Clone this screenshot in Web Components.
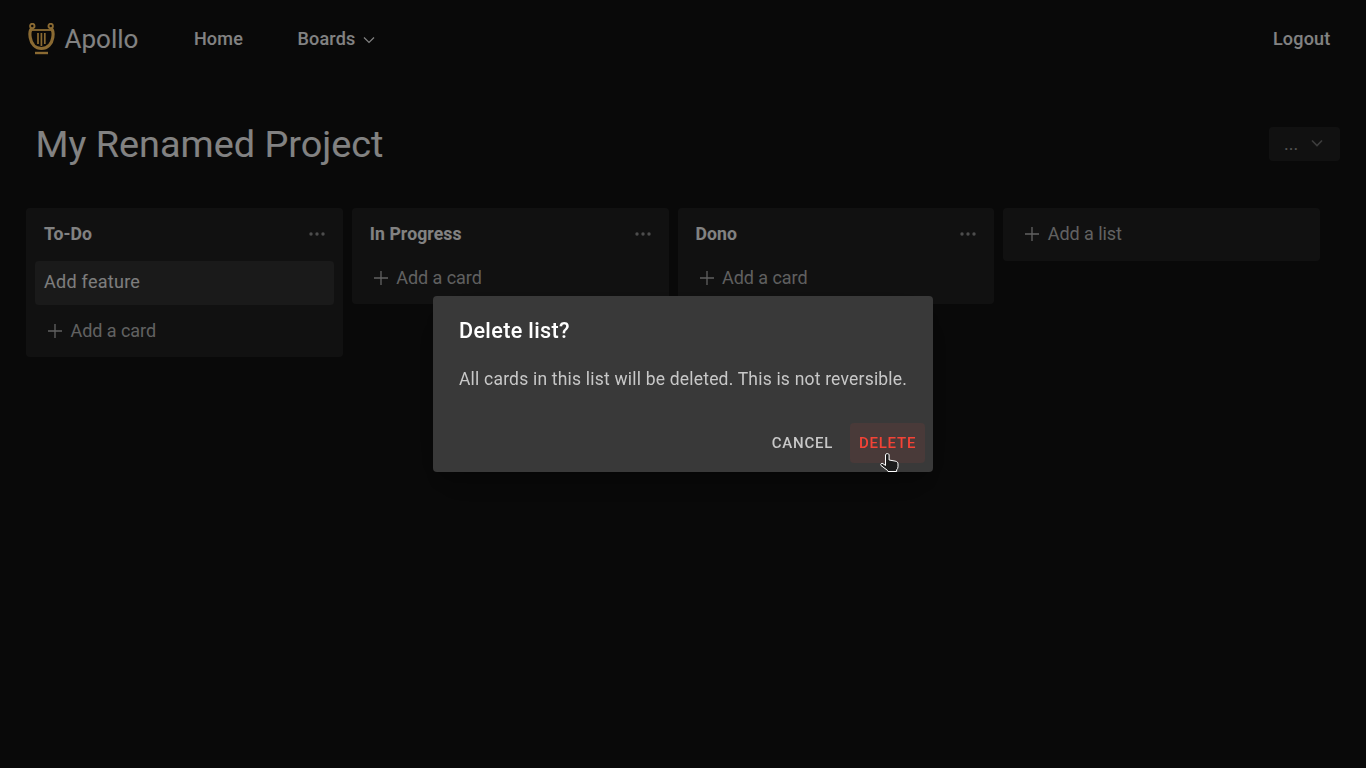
<!DOCTYPE html>
<html>
<head>
<meta charset="utf-8">
<title>Apollo</title>
<style>
    html, body { margin: 0; height: 100%; overflow: hidden; }
    body { background: #121212; font-family: Roboto, "Liberation Sans", sans-serif; color: #fff; }
</style>
</head>
<body>
<apollo-nav></apollo-nav>
<project-header>My Renamed Project</project-header>
<board-lists>
    <board-list name="To-Do"><list-card>Add feature</list-card></board-list>
    <board-list name="In Progress"></board-list>
    <board-list name="Dono"></board-list>
    <add-list></add-list>
</board-lists>
<dialog-overlay>
    <delete-dialog heading="Delete list?">All cards in this list will be deleted. This is not reversible.</delete-dialog>
</dialog-overlay>

<script>
class ApolloNav extends HTMLElement{
    constructor() {
        super();
        this.shadowDOM = this.attachShadow({mode:"open"});
        this.shadowDOM.innerHTML = `
        <style>
            :host { display: flex; align-items: center; height: 78px; padding: 0 35.500px 1px 26px; box-sizing: border-box; }
            svg.logo { width: 30px; height: 32px; margin: 1px 8.500px 0 0; }
            .brand { font-size: 26px; color: #f0f0f0; margin-right: 55.500px; }
            a { font-size: 18px; font-weight: 500; color: #f0f0f0; letter-spacing: .2px; }
            .boards { margin-left: 54.500px; display: flex; align-items: center; }
            .boards svg { width: 12px; height: 8px; margin-left: 7px; margin-top: 3px; }
            .logout { margin-left: auto; }
        </style>
        <svg class="logo" viewBox="0 0 30 32" fill="none" stroke="#ffc45d" stroke-width="3.200">
            <circle cx="6.300" cy="3" r="2.200" stroke-width="1.900"/>
            <circle cx="24.700" cy="3" r="2.200" stroke-width="1.900"/>
            <path d="M5.800 5.500C3.500 7.500 3.600 11 4.200 14.500 5.200 21 9.500 25.500 15.500 25.500S25.800 21 26.800 14.500C27.400 11 27.500 7.500 25.200 5.500"/>
            <path d="M5 7h21" stroke-width="1.800"/>
            <path d="M12 10v11M15.400 10v13M18.800 10v11" stroke-width="1.700"/>
            <path d="M9 30h13" stroke-width="2.400"/>
        </svg>
        <span class="brand">Apollo</span>
        <a>Home</a>
        <a class="boards">Boards
            <svg viewBox="0 0 12 8" fill="none" stroke="#f0f0f0" stroke-width="1.200"><path d="M1 1.500l5 5 5-5"/></svg>
        </a>
        <a class="logout">Logout</a>
        `;
    }
}
customElements.define("apollo-nav", ApolloNav);

class ProjectHeader extends HTMLElement{
    constructor() {
        super();
        this.shadowDOM = this.attachShadow({mode:"open"});
        this.shadowDOM.innerHTML = `
        <style>
            :host { display: flex; justify-content: space-between; align-items: center; height: 130px; padding: 0 26px 0 35.500px; }
            h1 { margin: 1px 0 0; font-size: 37.800px; font-weight: 400; color: #f0f0f0; }
            button { display: flex; align-items: center; justify-content: space-between; box-sizing: border-box; width: 71px; height: 34px; padding: 0 17px 0 15px; background: #212121; border: 0; border-radius: 4px; color: #9a9a9a; font: 18px Roboto, sans-serif; margin-top: 1px; }
            button svg { width: 12px; height: 8px; margin-top: -2px; }
        </style>
        <h1><slot></slot></h1>
        <button><span>...</span>
            <svg viewBox="0 0 12 8" fill="none" stroke="#707070" stroke-width="1.600"><path d="M1 1.500l5 5 5-5"/></svg>
        </button>
        `;
    }
}
customElements.define("project-header", ProjectHeader);

class BoardLists extends HTMLElement{
    constructor() {
        super();
        this.shadowDOM = this.attachShadow({mode:"open"});
        this.shadowDOM.innerHTML = `
        <style>
            :host { display: grid; grid-template-columns: repeat(4, 316.750px); column-gap: 9px; align-items: start; padding-left: 26px; }
        </style>
        <slot></slot>
        `;
    }
}
customElements.define("board-lists", BoardLists);

class BoardList extends HTMLElement{
    constructor() {
        super();
        this.shadowDOM = this.attachShadow({mode:"open"});
        this.shadowDOM.innerHTML = `
        <style>
            :host { display: block; background: #212121; border-radius: 4px; padding: 0 9px; }
            .head { display: flex; justify-content: space-between; align-items: center; height: 51px; padding: 0 9px 2px; }
            h3 { margin: 0; font-size: 17.600px; font-weight: 700; color: #f0f0f0; letter-spacing: .1px; }
            svg.dots { width: 16px; height: 4px; }
            .add { display: flex; align-items: center; box-sizing: border-box; height: 34px; padding: 0 0 1px 13px; font-size: 18px; color: #b4b4b4; }
            .add svg { width: 14px; height: 14px; margin-right: 9px; }
            .add span { position: relative; left: -.5px; letter-spacing: -.05px; }
            .foot { height: 9px; }
        </style>
        <div class="head">
            <h3></h3>
            <svg class="dots" viewBox="0 0 16 4" fill="#8e8e8e"><circle cx="2" cy="2" r="1.700"/><circle cx="8" cy="2" r="1.700"/><circle cx="14" cy="2" r="1.700"/></svg>
        </div>
        <slot></slot>
        <div class="add">
            <svg viewBox="0 0 14 14" fill="none" stroke="#b4b4b4" stroke-width="1.300"><path d="M7 0v14M0 7h14"/></svg>
            <span>Add a card</span>
        </div>
        <div class="foot"></div>
        `;
    }

    connectedCallback(){
        this.shadowDOM.querySelector("h3").textContent = this.getAttribute("name");
    }
}
customElements.define("board-list", BoardList);

class ListCard extends HTMLElement{
    constructor() {
        super();
        this.shadowDOM = this.attachShadow({mode:"open"});
        this.shadowDOM.innerHTML = `
        <style>
            :host { display: flex; align-items: center; box-sizing: border-box; height: 44px; padding: 0 9px 3px; margin-bottom: 9px; background: #303030; border-radius: 4px; font-size: 18px; letter-spacing: .27px; color: #e8e8e8; }
        </style>
        <slot></slot>
        `;
    }
}
customElements.define("list-card", ListCard);

class AddList extends HTMLElement{
    constructor() {
        super();
        this.shadowDOM = this.attachShadow({mode:"open"});
        this.shadowDOM.innerHTML = `
        <style>
            :host { display: flex; align-items: center; box-sizing: border-box; height: 53px; padding: 0 0 2px 22px; background: #212121; border-radius: 4px; font-size: 18px; color: #b4b4b4; }
            svg { width: 14px; height: 14px; margin-right: 9px; }
            span { position: relative; left: -.5px; letter-spacing: -.05px; }
        </style>
        <svg viewBox="0 0 14 14" fill="none" stroke="#b4b4b4" stroke-width="1.300"><path d="M7 0v14M0 7h14"/></svg>
        <span>Add a list</span>
        `;
    }
}
customElements.define("add-list", AddList);

class DialogOverlay extends HTMLElement{
    constructor() {
        super();
        this.shadowDOM = this.attachShadow({mode:"open"});
        this.shadowDOM.innerHTML = `
        <style>
            :host { position: fixed; inset: 0; display: flex; align-items: center; justify-content: center; background: rgba(0,0,0,.46); }
        </style>
        <slot></slot>
        `;
    }
}
customElements.define("dialog-overlay", DialogOverlay);

class DeleteDialog extends HTMLElement{
    constructor() {
        super();
        this.shadowDOM = this.attachShadow({mode:"open"});
        this.shadowDOM.innerHTML = `
        <style>
            :host { display: block; box-sizing: border-box; width: 500px; height: 176px; position: relative; background: #393939; border-radius: 4px; box-shadow: 0 11px 15px -7px rgba(0,0,0,.2), 0 24px 38px 3px rgba(0,0,0,.14), 0 9px 46px 8px rgba(0,0,0,.12); }
            h2 { margin: 0; padding: 22px 26px 0; font-size: 21.600px; line-height: 26px; font-weight: 500; color: #fff; letter-spacing: .35px; }
            p { margin: 0; padding: 23px 0 0 26px; font-size: 17.500px; line-height: 24px; color: #c8c8c8; letter-spacing: .2px; white-space: nowrap; }
            .actions { position: absolute; right: 8px; bottom: 9px; display: flex; align-items: center; gap: 0; }
            button { height: 40px; border: 0; border-radius: 4px; background: none; font: 500 15px Roboto, sans-serif; letter-spacing: .75px; text-transform: uppercase; padding: 0 9px; }
            .cancel { color: #c8c8c8; margin-right: 8px; }
            .delete { color: #f44336; background: #493a39; width: 75px; }
            svg.cursor { position: absolute; left: 447px; top: 157px; width: 19px; height: 19px; overflow: visible; }
        </style>
        <h2></h2>
        <p><slot></slot></p>
        <div class="actions">
            <button class="cancel">Cancel</button>
            <button class="delete">Delete</button>
        </div>
        <svg class="cursor" viewBox="0 0 19 19" fill="#1c1c1c" stroke="#fff" stroke-width="1" stroke-linejoin="round">
            <path d="M5.500 1.800c0-1.600 3.600-1.600 3.600 0v5.200l6 1.100c1.900.3 2.900 1.200 2.900 2.800v2.900c0 1.200-.6 2.300-1.400 3.100v1.600H8l-.6-1.200L1 12.500c-1-1.400.8-3 2-1.800l2.500 1.800z"/>
        </svg>
        `;
    }

    connectedCallback(){
        this.shadowDOM.querySelector("h2").textContent = this.getAttribute("heading");
    }
}
customElements.define("delete-dialog", DeleteDialog);
</script>
</body>
</html>
